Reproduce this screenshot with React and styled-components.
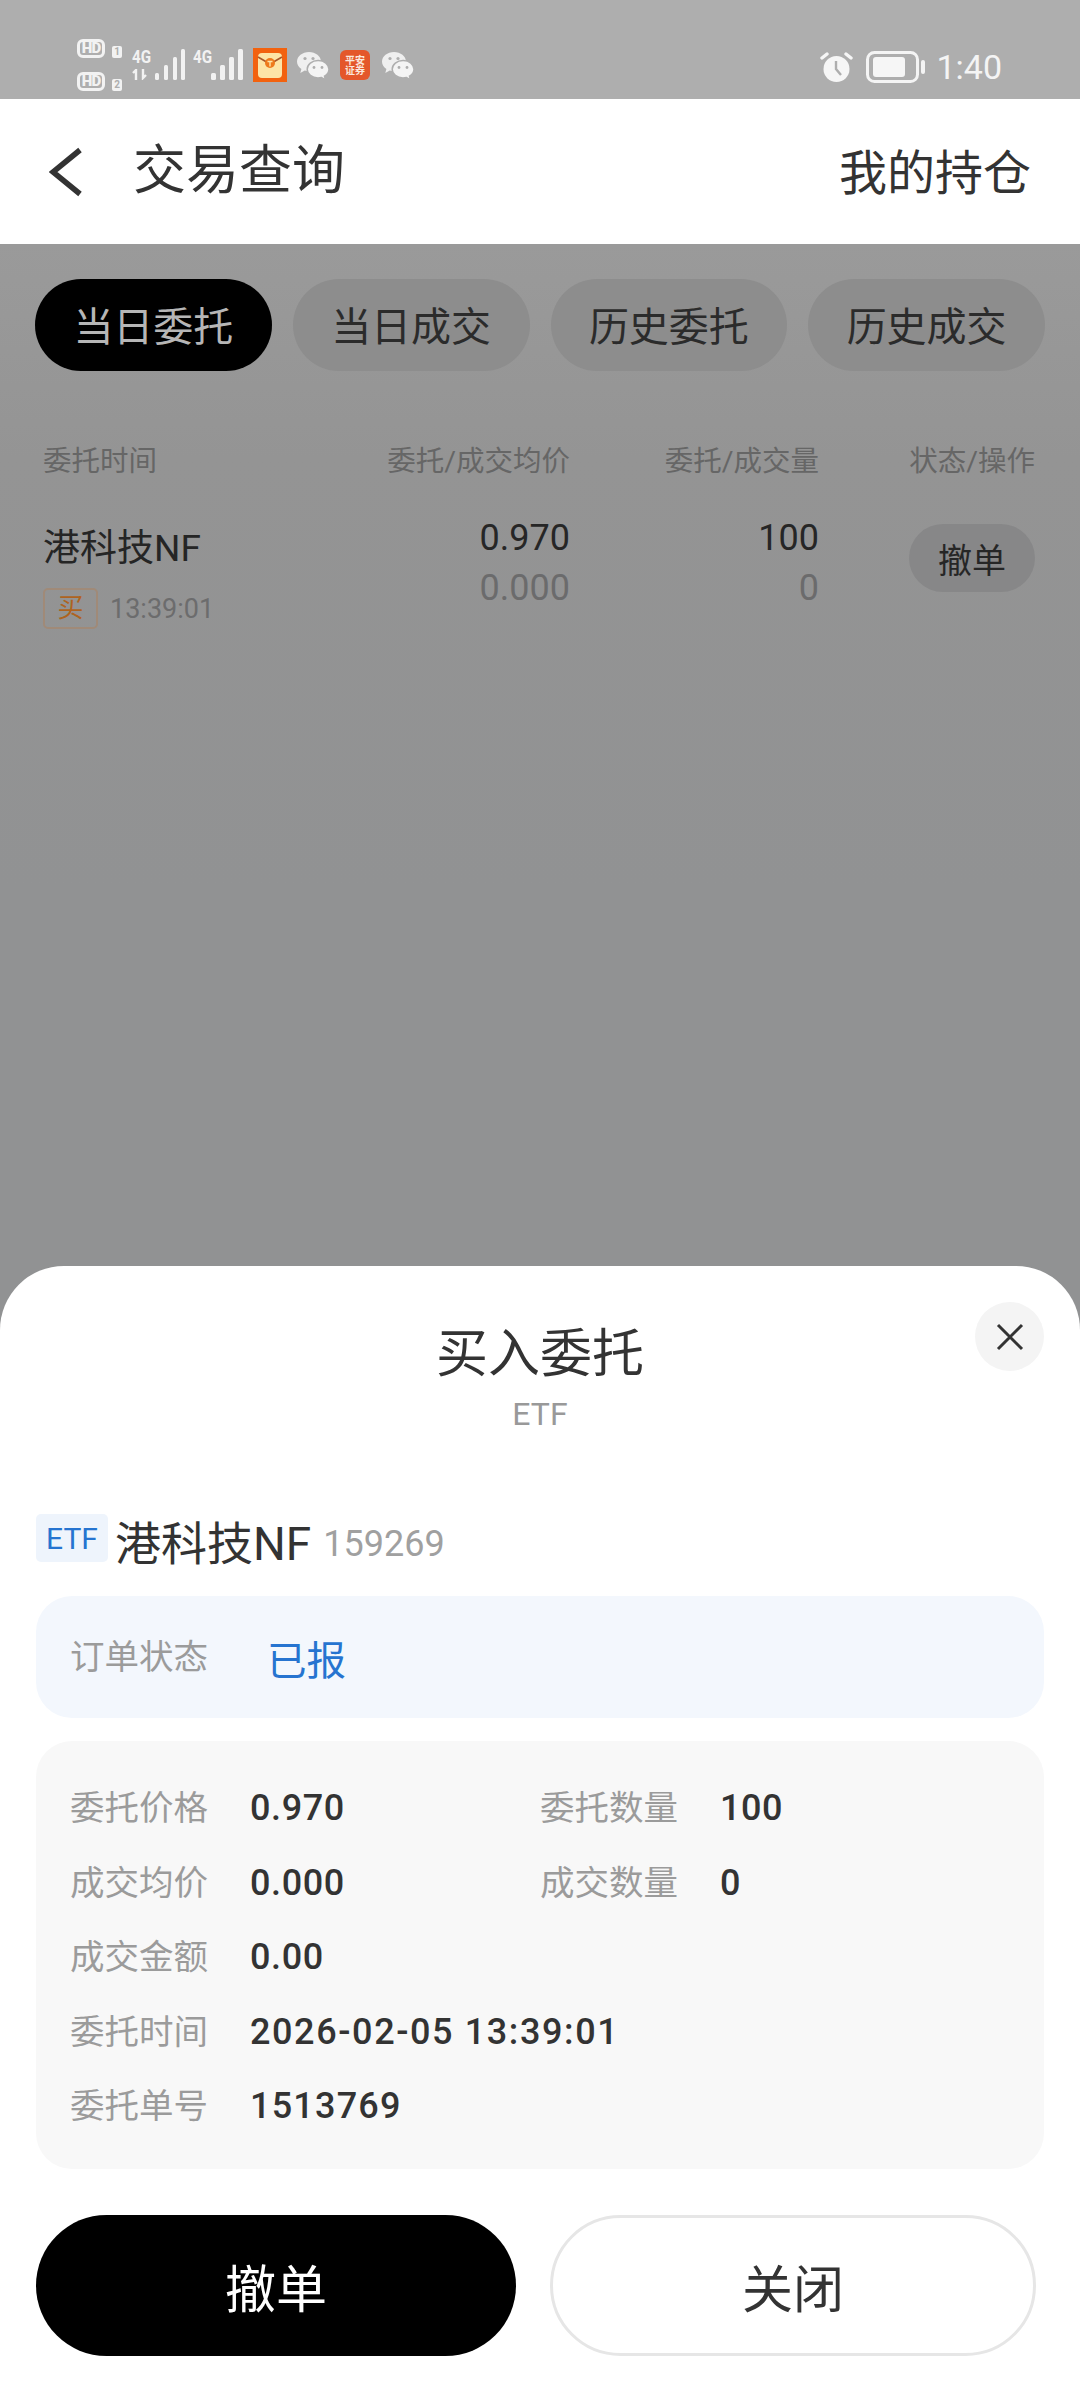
import React from "react";
import styled, { createGlobalStyle } from "styled-components";

const Global = createGlobalStyle`
  html, body { margin: 0; padding: 0; background: #fff; }
  * { box-sizing: border-box; }
  body { font-family: "Roboto", "Noto Sans CJK SC", sans-serif; }
`;

const Page = styled.div`
  width: 1080px; height: 2388px; display: flex; flex-direction: column; overflow: hidden;
`;
const StatusBar = styled.div`
  height: 99px; background: #aeaeae; display: flex; align-items: flex-start; padding: 39px 78px 0 77px; justify-content: space-between;
`;
const StatusLeft = styled.div`display: flex; align-items: flex-start;`;
const StatusRight = styled.div`display: flex; align-items: center; margin-top: 8px;`;
const SimColumn = styled.div`display: flex; flex-direction: column; gap: 14px; width: 55px;`;
const SimLine = styled.div`display: flex; align-items: flex-end; gap: 7px;`;
const HdBadge = styled.span`
  width: 28px; height: 19px; border: 3px solid #f2f2f2; border-radius: 6px; color: #f2f2f2;
  font: 900 15px/13px "Roboto", sans-serif; display: flex; align-items: center; justify-content: center; letter-spacing: -0.8px;
`;
const SimNum = styled.span`
  width: 10px; height: 12px; border-radius: 2px; background: #f2f2f2; color: #aeaeae;
  font: 700 10px/12px "Roboto", sans-serif; text-align: center;
`;
const Signal = styled.div`
  position: relative; width: ${p => p.$w}px; height: 31px; margin-top: 10px;
`;
const NetLabel = styled.span`
  position: absolute; left: 0; top: -2px; color: #f2f2f2; font: 700 19px/19px "Roboto", sans-serif; transform: scaleX(.8); transform-origin: left;
`;
const AppIcon = styled.svg`display: block; margin-top: ${p => p.$mt}px; margin-right: ${p => p.$mr}px; flex: none;`;
const Clock = styled.span`color: #f4f4f4; font: 400 34px/40px "Roboto", sans-serif; margin-left: 10px;`;

const Header = styled.header`
  height: 145px; background: #fff; display: flex; align-items: center; padding: 0 49px 0 49px;
`;
const Title = styled.h1`
  margin: 0 0 0 50px; font-size: 53px; font-weight: 400; color: #333; flex: 1; line-height: 1; position: relative;
`;
const HeaderLink = styled.span`font-size: 48px; color: #333; line-height: 1; position: relative; top: 2px;`;

const Backdrop = styled.div`
  flex: 1; display: flex; flex-direction: column; background: linear-gradient(#9a9a9a, #949494 10%, #919293 30%, #919293);
`;
const Content = styled.main`flex: 1; padding: 35px 35px 0;`;
const Tabs = styled.div`display: flex; gap: 21px;`;
const Tab = styled.div`
  width: 238px; height: 92px; border-radius: 46px; display: flex; align-items: center; justify-content: center; padding-bottom: 3px;
  font-size: 40px; background: ${p => p.$active ? "#000" : "#8d8d8d"}; color: ${p => p.$active ? "#b6b6b6" : "#2b2b2b"};
`;
const Table = styled.div`
  display: grid; grid-template-columns: 247px 280px 249px 216px; margin: 71px 0 0 8px; align-items: start;
`;
const HeadCell = styled.div`
  font-size: 28.5px; line-height: 40px; color: #666; text-align: ${p => p.$left ? "left" : "right"}; white-space: nowrap;
`;
const NameCell = styled.div`padding-top: 42px; grid-column: 1;`;
const StockName = styled.div`font-size: 37px; line-height: 50px; color: #252525;`;
const StockMeta = styled.div`display: flex; align-items: center; gap: 12px; margin-top: 14px;`;
const BuyTag = styled.span`
  width: 55px; height: 41px; border: 2px solid #a08a78; border-radius: 5px; color: #ae6320; font-size: 26px; line-height: 37px; text-align: center;
`;
const TimeText = styled.span`font-size: 27px; color: #6c6c6d;`;
const NumCell = styled.div`padding-top: 31px; text-align: right;`;
const NumTop = styled.div`font-size: 36px; line-height: 50px; color: #262626;`;
const NumBottom = styled.div`font-size: 36px; line-height: 50px; color: #6b6b6c;`;
const ActionCell = styled.div`display: flex; justify-content: flex-end; padding-top: 42px;`;
const CancelSmall = styled.div`
  width: 126px; height: 68px; border-radius: 34px; background: #878788; color: #262626; font-size: 34px; display: flex; align-items: center; justify-content: center;
`;

const Sheet = styled.section`
  height: 1122px; background: #fff; border-radius: 64px 64px 0 0; position: relative; padding: 0 36px; display: flex; flex-direction: column;
`;
const CloseBtn = styled.div`
  position: absolute; right: 36px; top: 36px; width: 69px; height: 69px; border-radius: 50%; background: #f4f4f4;
  display: flex; align-items: center; justify-content: center;
`;
const SheetTitle = styled.h2`
  margin: 57px 0 0; text-align: center; font-size: 52px; line-height: 64px; font-weight: 400; color: #333;
`;
const SheetSub = styled.div`text-align: center; font-size: 32px; line-height: 44px; color: #999; margin-top: 5px;`;
const StockRow = styled.div`display: flex; align-items: center; margin-top: 78px; height: 60px;`;
const EtfTag = styled.span`
  width: 72px; height: 48px; border-radius: 5px; background: #eef4fc; color: #2674d0; font-size: 30px; display: flex; align-items: center; justify-content: center; margin-right: 7px; position: relative; top: -6px;
`;
const SheetName = styled.span`font-size: 46px; color: #333; line-height: 60px;`;
const SheetCode = styled.span`font-size: 36px; color: #a0a0a0; margin-left: 12px; line-height: 60px;`;
const StatusBox = styled.div`
  height: 122px; margin-top: 22px; border-radius: 36px; background: #f3f7fd; display: flex; align-items: center; padding: 0 34px;
`;
const Label = styled.span`font-size: 34.5px; color: #9b9b9b; width: ${p => p.$w}px; flex: none; line-height: 44px;`;
const StatusValue = styled.span`font-size: 39.5px; color: #2674d0;`;
const DetailBox = styled.div`
  height: 428px; margin-top: 23px; border-radius: 36px; background: #f8f8f8; padding: 30px 34px 0; display: grid;
  grid-template-columns: 470px 1fr; grid-auto-rows: 74.5px; align-items: center;
`;
const DetailItem = styled.div`display: flex; align-items: center; grid-column: ${p => p.$span ? "1 / 3" : "auto"};`;
const DetailValue = styled.span`font-size: 36px; font-weight: 500; color: #333; letter-spacing: ${p => p.$track}px;`;
const Buttons = styled.div`display: flex; margin-top: 46px; gap: 34px;`;
const PrimaryBtn = styled.div`
  width: 480px; height: 141px; border-radius: 71px; background: #000; color: #fff; font-size: 51px; display: flex; align-items: center; justify-content: center;
`;
const GhostBtn = styled.div`
  width: 486px; height: 141px; border-radius: 71px; background: #fff; border: 3px solid #e6e6e6; color: #333; font-size: 51px; display: flex; align-items: center; justify-content: center;
`;

const Bars = ({ x = 0, dots }) => (
  <svg width="34" height="31" viewBox="0 0 34 31" style={{ position: "absolute", left: x, top: 0 }}>
    {dots.map(([bx, h, w], i) => <rect key={i} x={bx} y={31 - h} width={w} height={h} rx="1.5" fill="#f2f2f2" />)}
  </svg>
);

const WeChat = ({ mr, mt = 13 }) => (
  <AppIcon width="32" height="28" viewBox="0 0 32 28" $mr={mr} $mt={mt}>
    <path d="M12 0C5.4 0 0 4.3 0 9.6c0 3 1.7 5.6 4.4 7.4L3.3 21l4.5-2.4c1.3.4 2.7.6 4.2.6 6.6 0 12-4.3 12-9.6S18.6 0 12 0z" fill="#efefef" />
    <path d="M21 8.5c-6 0-10.8 4-10.8 8.8S15 26 21 26c1.2 0 2.4-.2 3.5-.5l4 2.3-1-3.6c2.7-1.6 4.5-4 4.5-6.9 0-4.8-4.8-8.8-10.500-8.800z" fill="#f4f4f4" stroke="#aeaeae" strokeWidth="1.5" />
    <circle cx="8" cy="6.5" r="1.6" fill="#aeaeae" /><circle cx="16" cy="6.5" r="1.6" fill="#aeaeae" />
    <circle cx="17" cy="15.5" r="1.4" fill="#aeaeae" /><circle cx="25" cy="15.5" r="1.4" fill="#aeaeae" />
  </AppIcon>
);

const rows = [
  [["委托价格", "0.970", 0.6], ["委托数量", "100", 0.6]],
  [["成交均价", "0.000", 0.6], ["成交数量", "0", 0.6]],
  [["成交金额", "0.00", 0.6]],
  [["委托时间", "2026-02-05 13:39:01", 1.6]],
  [["委托单号", "1513769", 1.2]],
];

export default function App() {
  return (
    <Page>
      <Global />
      <StatusBar>
        <StatusLeft>
          <SimColumn>
            <SimLine><HdBadge>HD</HdBadge><SimNum>1</SimNum></SimLine>
            <SimLine><HdBadge>HD</HdBadge><SimNum>2</SimNum></SimLine>
          </SimColumn>
          <Signal $w={61}>
            <NetLabel>4G</NetLabel>
            <svg width="22" height="11" viewBox="0 0 22 11" style={{ position: "absolute", left: 0, top: 20 }}>
              <path d="M1 4l3-3v10M11 0v9l3-3" fill="none" stroke="#f2f2f2" strokeWidth="2.4" />
            </svg>
            <Bars x={22} dots={[[1, 7, 4], [10, 15, 4], [19, 23, 4], [27, 31, 4]]} />
          </Signal>
          <Signal $w={60}>
            <NetLabel>4G</NetLabel>
            <Bars x={18} dots={[[0, 7, 5], [9, 15, 5], [18, 23, 5], [27, 31, 5]]} />
          </Signal>
          <AppIcon width="34" height="34" viewBox="0 0 34 34" $mr={10} $mt={9}>
            <rect width="34" height="34" fill="#f2620f" />
            <rect x="5" y="5" width="24" height="25" rx="4" fill="#fde5a6" />
            <path d="M5 9l12 7 12-7" fill="none" stroke="#a8572a" strokeWidth="1.6" />
            <circle cx="17" cy="15" r="5" fill="#ee7a1c" />
            <path d="M14.500 13.500h5M17 13.500v5" stroke="#fde5a6" strokeWidth="1.4" />
          </AppIcon>
          <WeChat mr={11} />
          <AppIcon width="30" height="30" viewBox="0 0 30 30" $mr={12} $mt={11}>
            <rect width="30" height="30" rx="6" fill="#e4572a" />
            <text x="15" y="13.500" textAnchor="middle" fontSize="10" fontWeight="700" fill="#fbe7dc" fontFamily="Noto Sans CJK SC">平安</text>
            <text x="15" y="24" textAnchor="middle" fontSize="10" fontWeight="700" fill="#fbe7dc" fontFamily="Noto Sans CJK SC">证券</text>
          </AppIcon>
          <WeChat mr={0} />
        </StatusLeft>
        <StatusRight>
          <AppIcon width="33" height="32" viewBox="0 0 33 32" $mr={13} $mt={0}>
            <circle cx="16.500" cy="18" r="13" fill="#f6f6f6" />
            <path d="M16 10v8l5 6" fill="none" stroke="#aeaeae" strokeWidth="2.400" />
            <path d="M2 7l5-4M31 7l-5-4" stroke="#f6f6f6" strokeWidth="3.400" strokeLinecap="round" />
          </AppIcon>
          <AppIcon width="60" height="32" viewBox="0 0 60 32" $mr={0} $mt={0}>
            <rect x="1.500" y="1.500" width="50" height="29" rx="7" fill="none" stroke="#f4f4f4" strokeWidth="3" />
            <rect x="7" y="6" width="32" height="20" rx="3" fill="#f6f6f6" />
            <rect x="55" y="9" width="4" height="14" rx="2" fill="#f4f4f4" />
          </AppIcon>
          <Clock>1:40</Clock>
        </StatusRight>
      </StatusBar>
      <Header>
        <svg width="34" height="50" viewBox="0 0 34 50"><path d="M31 3L4 25l27 22" fill="none" stroke="#333" strokeWidth="5.500" /></svg>
        <Title>交易查询</Title>
        <HeaderLink>我的持仓</HeaderLink>
      </Header>
      <Backdrop>
        <Content>
          <Tabs>
            <Tab $active>当日委托</Tab>
            <Tab>当日成交</Tab>
            <Tab>历史委托</Tab>
            <Tab>历史成交</Tab>
          </Tabs>
          <Table>
            <HeadCell $left>委托时间</HeadCell>
            <HeadCell>委托/成交均价</HeadCell>
            <HeadCell>委托/成交量</HeadCell>
            <HeadCell>状态/操作</HeadCell>
            <NameCell>
              <StockName>港科技NF</StockName>
              <StockMeta><BuyTag>买</BuyTag><TimeText>13:39:01</TimeText></StockMeta>
            </NameCell>
            <NumCell><NumTop>0.970</NumTop><NumBottom>0.000</NumBottom></NumCell>
            <NumCell><NumTop>100</NumTop><NumBottom>0</NumBottom></NumCell>
            <ActionCell><CancelSmall>撤单</CancelSmall></ActionCell>
          </Table>
        </Content>
        <Sheet>
          <CloseBtn>
            <svg width="28" height="28" viewBox="0 0 28 28"><path d="M2 2l24 24M26 2L2 26" stroke="#333" strokeWidth="3" /></svg>
          </CloseBtn>
          <SheetTitle>买入委托</SheetTitle>
          <SheetSub>ETF</SheetSub>
          <StockRow>
            <EtfTag>ETF</EtfTag>
            <SheetName>港科技NF</SheetName>
            <SheetCode>159269</SheetCode>
          </StockRow>
          <StatusBox>
            <Label $w={197}>订单状态</Label>
            <StatusValue>已报</StatusValue>
          </StatusBox>
          <DetailBox>
            {rows.flatMap((r) => r.map(([l, v, t]) => (
              <DetailItem key={l} $span={r.length === 1}>
                <Label $w={180}>{l}</Label>
                <DetailValue $track={t}>{v}</DetailValue>
              </DetailItem>
            )))}
          </DetailBox>
          <Buttons>
            <PrimaryBtn>撤单</PrimaryBtn>
            <GhostBtn>关闭</GhostBtn>
          </Buttons>
        </Sheet>
      </Backdrop>
    </Page>
  );
}
